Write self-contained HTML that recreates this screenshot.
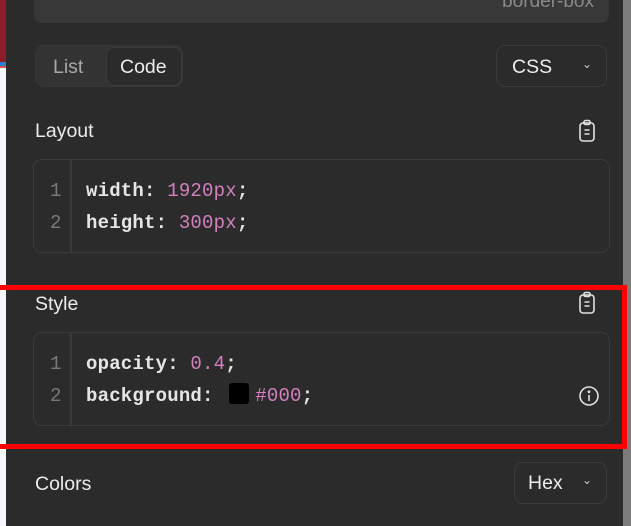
<!DOCTYPE html>
<html><head><style>
*{margin:0;padding:0;box-sizing:border-box}
body{width:631px;height:526px;overflow:hidden;background:#f4f6fa;position:relative;font-family:"Liberation Sans",sans-serif;color:#e8e8e8}
.abs{position:absolute}
.panel{left:6px;top:0;width:617px;height:526px;background:#2b2b2b}
.mono{font-family:"Liberation Mono",monospace;font-size:19px;font-weight:bold;color:#e6e6e6;letter-spacing:0.2px}
.p{color:#d57fc0;font-weight:normal}
.ln{color:#7a7a7a;font-weight:normal}
.lbl{font-size:19.5px;color:#ececec}
.box{border:1.5px solid #3a3a3a;border-radius:9px}
.gut{width:1.5px;background:#3a3a3a}
</style></head><body>
<div class="abs" style="left:0;top:0;width:6px;height:62px;background:#8e1c2a"></div>
<div class="abs" style="left:0;top:62px;width:6px;height:4px;background:#2a7fd0"></div>
<div class="abs" style="left:0;top:66px;width:6px;height:2px;background:#e05050"></div>
<div class="abs panel"></div>
<div class="abs" style="left:623px;top:0;width:8px;height:526px;background:#7c7c7c"></div>

<div class="abs" style="left:34px;top:-20px;width:575px;height:43px;background:#383838;border-radius:8px"></div>
<div class="abs" style="left:470px;top:-9px;width:124px;text-align:right;font-size:19px;color:#8a8a8a">border-box</div>

<div class="abs" style="left:35px;top:45px;width:148px;height:42px;background:#333;border-radius:9px;border:1px solid #363636"></div>
<div class="abs lbl" style="left:53px;top:56px;color:#a8a8a8">List</div>
<div class="abs" style="left:106px;top:47px;width:76px;height:39px;background:#2b2b2b;border:1.5px solid #3c3c3c;border-radius:8px"></div>
<div class="abs lbl" style="left:120px;top:56px">Code</div>

<div class="abs box" style="left:496px;top:45px;width:111px;height:42px"></div>
<div class="abs lbl" style="left:512px;top:56px">CSS</div>
<div class="abs" style="left:582px;top:57px;font-size:12px;color:#ccc">&#8964;</div>

<div class="abs lbl" style="left:35px;top:120px">Layout</div>
<svg class="abs" style="left:578px;top:119px" width="18" height="24" viewBox="0 0 18 24" fill="none" stroke="#e0e0e0" stroke-width="1.6"><rect x="2" y="4" width="14" height="18" rx="3"/><rect x="6" y="1.5" width="6" height="4" rx="1.5"/><path d="M6.5 11h5M6.5 15h5"/></svg>
<div class="abs box" style="left:33px;top:159px;width:577px;height:94px"></div>
<div class="abs gut" style="left:70px;top:160px;height:92px"></div>
<div class="abs mono" style="left:50px;top:175px;line-height:32px"><span class="ln">1</span><br><span class="ln">2</span></div>
<div class="abs mono" style="left:86px;top:175px;line-height:32px">width: <span class="p">1920px</span>;<br>height: <span class="p">300px</span>;</div>

<div class="abs lbl" style="left:35px;top:293px">Style</div>
<svg class="abs" style="left:578px;top:291px" width="18" height="24" viewBox="0 0 18 24" fill="none" stroke="#e0e0e0" stroke-width="1.6"><rect x="2" y="4" width="14" height="18" rx="3"/><rect x="6" y="1.5" width="6" height="4" rx="1.5"/><path d="M6.5 11h5M6.5 15h5"/></svg>
<div class="abs box" style="left:33px;top:332px;width:577px;height:94px"></div>
<div class="abs gut" style="left:70px;top:333px;height:92px"></div>
<div class="abs mono" style="left:50px;top:348px;line-height:32px"><span class="ln">1</span><br><span class="ln">2</span></div>
<div class="abs mono" style="left:86px;top:348px;line-height:32px">opacity: <span class="p">0.4</span>;<br>background: <span style="display:inline-block;width:20px;height:21px;background:#000;border-radius:3px;vertical-align:-3px;margin-left:4px;margin-right:6px"></span><span class="p">#000</span>;</div>
<svg class="abs" style="left:578px;top:385px" width="22" height="22" viewBox="0 0 22 22" fill="none" stroke="#e0e0e0" stroke-width="1.6"><circle cx="11" cy="11" r="9"/><path d="M11 10v6"/><circle cx="11" cy="6.8" r="0.6" fill="#e0e0e0"/></svg>

<div class="abs" style="left:-10px;top:285px;width:637px;height:164px;border:5px solid #f00"></div>

<div class="abs lbl" style="left:35px;top:473px">Colors</div>
<div class="abs box" style="left:514px;top:462px;width:93px;height:42px"></div>
<div class="abs lbl" style="left:528px;top:472px">Hex</div>
<div class="abs" style="left:582px;top:473px;font-size:12px;color:#ccc">&#8964;</div>
</body></html>
